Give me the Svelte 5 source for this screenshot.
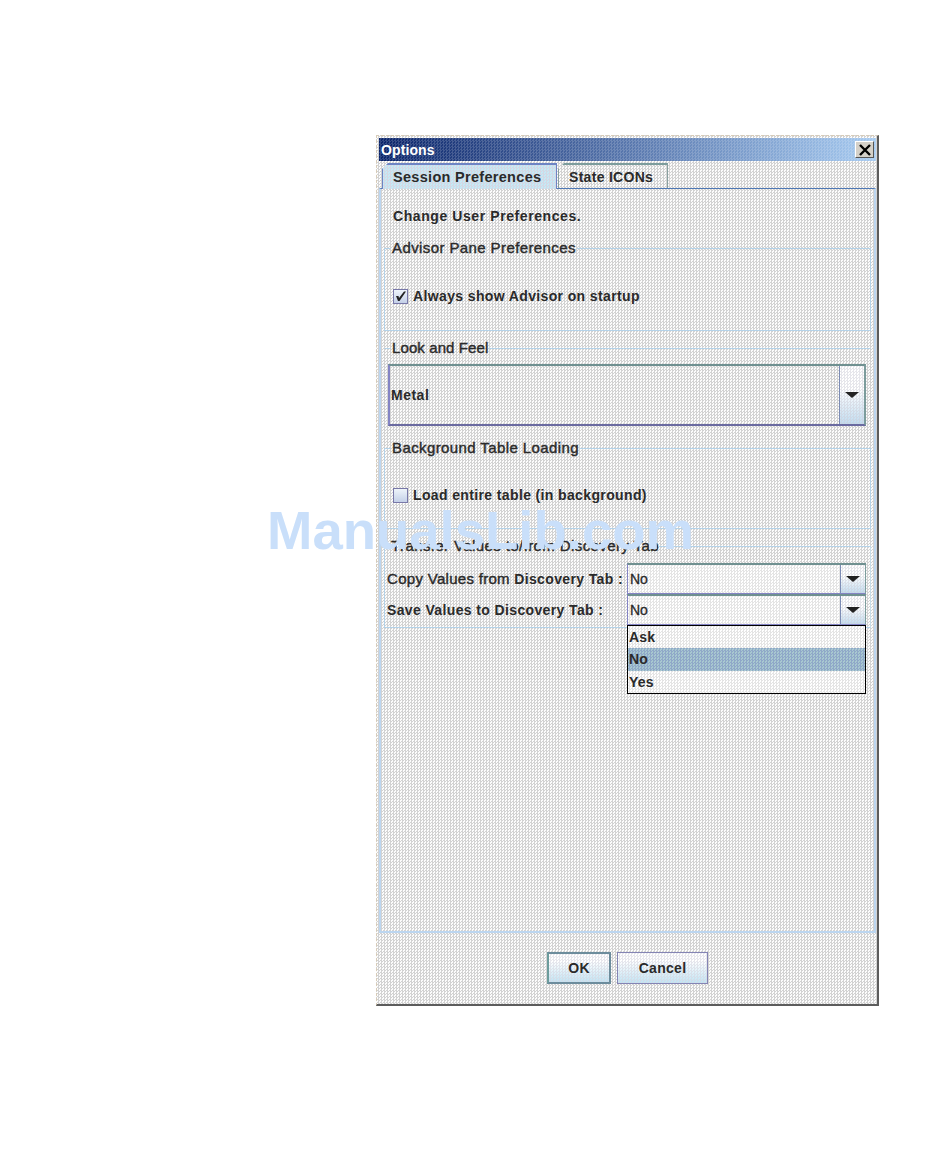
<script>
	let popupItems = ['Ask', 'No', 'Yes'];
	let selected = 'No';
</script>

<div class="page">
	<div class="window">
		<div class="titlebar">
			<span class="title">Options</span>
			<button class="close" aria-label="Close">
				<svg width="14" height="12" viewBox="0 0 14 12"><path d="M2 1 L12 11 M12 1 L2 11" stroke="#000" stroke-width="2.4" fill="none" /></svg>
			</button>
		</div>

		<div class="tabs">
			<div class="tab active">Session Preferences</div>
			<div class="tab">State ICONs</div>
		</div>

		<div class="panel">
			<p class="intro">Change User Preferences.</p>

			<fieldset class="group advisor">
				<legend>Advisor Pane Preferences</legend>
				<label class="check">
					<span class="box">
						<svg width="13" height="13" viewBox="0 0 13 13"><path d="M2 6 L4.5 6 L5 8 L10 1.5 L12 1.5 L5.5 11 L4 11 Z" fill="#222" /></svg>
					</span>
					Always show Advisor on startup
				</label>
			</fieldset>

			<fieldset class="group look">
				<legend>Look and Feel</legend>
				<div class="combo big">
					<span class="value">Metal</span>
					<span class="arrow"><i></i></span>
				</div>
			</fieldset>

			<fieldset class="group loading">
				<legend>Background Table Loading</legend>
				<label class="check">
					<span class="box"></span>
					Load entire table (in background)
				</label>
			</fieldset>

			<fieldset class="group transfer">
				<legend>Transfer Values to/from Discovery Tab</legend>
				<div class="row">
					<span class="label"><em>Copy Values from</em> Discovery Tab :</span>
					<div class="combo light">
						<span class="value">No</span>
						<span class="arrow"><i></i></span>
					</div>
				</div>
				<div class="row">
					<span class="label">Save Values to Discovery Tab :</span>
					<div class="combo light">
						<span class="value">No</span>
						<span class="arrow"><i></i></span>
					</div>
				</div>
				<ul class="popup">
					{#each popupItems as item}
						<li class:hl={item === selected}>{item}</li>
					{/each}
				</ul>
			</fieldset>
		</div>

		<div class="footer">
			<button class="btn ok">OK</button>
			<button class="btn cancel">Cancel</button>
		</div>
	</div>

	<div class="watermark">ManualsLib.com</div>
</div>

<style>
	:global(body) {
		background: #fff;
	}

	.page {
		position: relative;
		height: 1172px;
		padding: 135px 0 0 376px;
		box-sizing: border-box;
		overflow: hidden;
		font-family: 'Liberation Sans', Arial, sans-serif;
		font-size: 14px;
		font-weight: bold;
		letter-spacing: 0.37px;
		color: #2a2a2a;
	}

	.window {
		width: 503px;
		height: 871px;
		box-sizing: border-box;
		padding: 2px 1px 1px 2px;
		border-top: 1px dashed #d8ccb8;
		border-left: 1px dashed #d8ccb8;
		border-right: 2px solid #5c5c5c;
		border-bottom: 2px solid #5c5c5c;
		background: repeating-conic-gradient(#d2d2d2 0 25%, #fcfcfc 0 50%) 0 0 / 3px 3px;
	}

	.titlebar {
		display: flex;
		align-items: center;
		justify-content: space-between;
		height: 23px;
		padding: 0 2px;
		box-sizing: border-box;
		background:
			repeating-conic-gradient(rgba(255, 255, 255, 0.16) 0 25%, transparent 0 50%) 0 0 / 3px 3px,
			linear-gradient(90deg, #0a246a, #a6caf0);
	}

	.title {
		color: #fff;
		font-size: 14px;
		letter-spacing: 0.1px;
	}

	.close {
		display: flex;
		align-items: center;
		justify-content: center;
		width: 19px;
		height: 17px;
		padding: 0;
		border: 1px solid;
		border-color: #fff #555 #555 #fff;
		background: #d4d0c8;
	}

	.tabs {
		display: flex;
		gap: 1px;
		height: 25px;
		margin-top: 2px;
		padding-left: 3px;
	}

	.tab {
		display: flex;
		align-items: center;
		width: 110px;
		height: 25px;
		box-sizing: border-box;
		padding-left: 10px;
		letter-spacing: 0.3px;
		border: 1px solid #8aa0a0;
		border-top: 2px solid #7c9c9c;
		border-bottom: 0;
		clip-path: polygon(6px 0, 100% 0, 100% 100%, 0 100%, 0 6px);
	}

	.tab.active {
		position: relative;
		z-index: 1;
		width: 175px;
		height: 26px;
		padding-left: 10px;
		font-size: 14.5px;
		border-color: #6d84c4;
		background:
			repeating-conic-gradient(#d4d8e4 0 25%, transparent 0 50%) 0 0 / 3px 3px,
			#c4eaf6;
	}

	.panel {
		height: 745px;
		box-sizing: border-box;
		padding: 0 3px;
		border: 2px solid #bcd6f0;
		border-top: 1px solid #4f78b4;
	}

	.intro {
		height: 16px;
		margin: 19px 0 0 9px;
		line-height: 16px;
		letter-spacing: 0.58px;
	}

	.group {
		min-width: 0;
		margin: 9px 0 0;
		padding: 0 4px 0 3px;
		border: 1px solid #b4d2e8;
	}

	.group legend {
		height: 16px;
		margin-left: 3px;
		padding: 0 1px;
		line-height: 16px;
		font-size: 15px;
		font-weight: normal;
		letter-spacing: 0.4px;
		-webkit-text-stroke: 0.4px #2a2a2a;
	}

	.advisor {
		height: 91px;
		margin-top: 16px;
		padding-top: 32px;
		box-sizing: border-box;
	}

	.look {
		height: 90px;
		box-sizing: border-box;
		padding-top: 8px;
		border-right-color: transparent;
		border-bottom-color: transparent;
		border-left-color: transparent;
	}

	.look legend {
		letter-spacing: 0.1px;
	}

	.loading {
		height: 89px;
		box-sizing: border-box;
		margin-top: 10px;
		padding-top: 31px;
	}

	.transfer {
		position: relative;
		height: 90px;
		box-sizing: border-box;
		padding: 9px 4px 0 2px;
		border-right-color: #c6dce8;
	}

	.check {
		display: flex;
		align-items: center;
		gap: 5px;
		height: 16px;
		padding-left: 5px;
	}

	.box {
		display: flex;
		align-items: center;
		justify-content: center;
		width: 15px;
		height: 15px;
		box-sizing: border-box;
		border: 1px solid #7878a8;
		background: linear-gradient(#eef4fa, #c4d0e8);
	}

	.combo {
		display: flex;
		align-items: center;
		justify-content: space-between;
		box-sizing: border-box;
		height: 31px;
		border: 1px solid #8484c4;
		border-top: 2px solid #6f9090;
		border-right-color: #7c9c9c;
	}

	.combo.big {
		height: 62px;
		border-width: 2px;
		border-bottom-color: #6a6aa0;
	}

	.combo.light {
		background: repeating-conic-gradient(#e4e4e4 0 25%, #fff 0 50%) 0 0 / 3px 3px;
	}

	.value {
		padding-left: 2px;
		font-weight: normal;
		letter-spacing: 0;
		-webkit-text-stroke: 0.3px #2a2a2a;
	}

	.big .value {
		padding-left: 1px;
		font-weight: bold;
		letter-spacing: 0.5px;
		-webkit-text-stroke: 0;
	}

	.arrow {
		display: flex;
		align-items: center;
		justify-content: center;
		align-self: stretch;
		width: 24px;
		border-left: 1px solid #7c8cb4;
		background:
			repeating-conic-gradient(rgba(205, 205, 215, 0.5) 0 25%, transparent 0 50%) 0 0 / 3px 3px,
			linear-gradient(#fff 40%, #c0dcf0);
	}

	.arrow i {
		width: 0;
		height: 0;
		border: 7px solid transparent;
		border-top: 6px solid #222;
		border-bottom: 0;
	}

	.row {
		display: grid;
		grid-template-columns: 240px 1fr;
		align-items: center;
	}

	.label {
		white-space: nowrap;
	}

	.label em {
		font-size: 15px;
		font-style: normal;
		font-weight: normal;
		letter-spacing: 0.3px;
		-webkit-text-stroke: 0.4px #2a2a2a;
	}

	.popup {
		position: absolute;
		top: 71px;
		left: 242px;
		z-index: 2;
		width: 239px;
		height: 69px;
		box-sizing: border-box;
		margin: 0;
		padding: 0;
		list-style: none;
		border: 1px solid #000;
		background: repeating-conic-gradient(#e4e4e4 0 25%, #fff 0 50%) 0 0 / 3px 3px;
	}

	.popup li {
		height: 22.3px;
		padding-left: 1px;
		line-height: 23px;
		letter-spacing: 0.2px;
	}

	.popup li.hl {
		background: repeating-conic-gradient(#8fa8c8 0 25%, #a8c8d0 0 50%) 0 0 / 3px 3px;
	}

	.footer {
		display: flex;
		gap: 6px;
		padding: 19px 0 0 168px;
	}

	.btn {
		height: 32px;
		padding: 0;
		font: inherit;
		letter-spacing: 0.3px;
		color: inherit;
		border: 1px solid #8484b4;
		background:
			repeating-conic-gradient(rgba(215, 215, 225, 0.6) 0 25%, transparent 0 50%) 0 0 / 3px 3px,
			linear-gradient(#fff 25%, #c0e4f4);
	}

	.ok {
		width: 64px;
		border: 2px solid #6c8c9c;
		border-left-color: #6c9c9c;
	}

	.cancel {
		width: 91px;
	}

	.watermark {
		position: absolute;
		top: 498px;
		left: 267px;
		font-size: 54.5px;
		line-height: 66px;
		letter-spacing: 0;
		color: #c9dffa;
		white-space: nowrap;
	}
</style>
